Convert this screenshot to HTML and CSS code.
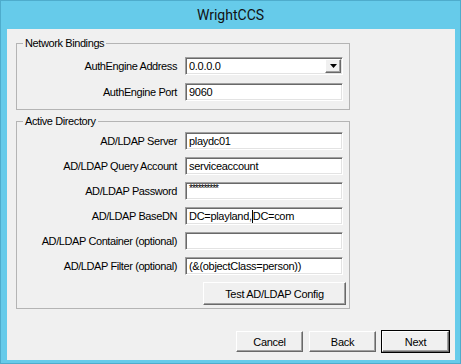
FILE: index.html
```html
<!DOCTYPE html>
<html lang="en">
<head>
<meta charset="utf-8">
<title>WrightCCS</title>
<link rel="stylesheet" href="styles.css">
</head>
<body>
    <div class="window">
        <div class="titlebar">WrightCCS</div>
        <div class="client">

            <fieldset class="group group_network">
                <legend>Network Bindings</legend>
                <div class="row">
                    <label class="field_label">AuthEngine Address</label>
                    <div class="combo">
                        <span class="combo_value">0.0.0.0</span>
                        <span class="combo_drop">
                            <svg width="7" height="4" viewBox="0 0 7 4"><path d="M0 0H7L3.5 4Z" fill="#000"/></svg>
                        </span>
                    </div>
                </div>
                <div class="row">
                    <label class="field_label">AuthEngine Port</label>
                    <div class="textbox">9060</div>
                </div>
            </fieldset>

            <fieldset class="group group_ad">
                <legend>Active Directory</legend>
                <div class="row">
                    <label class="field_label">AD/LDAP Server</label>
                    <div class="textbox">playdc01</div>
                </div>
                <div class="row">
                    <label class="field_label">AD/LDAP Query Account</label>
                    <div class="textbox">serviceaccount</div>
                </div>
                <div class="row">
                    <label class="field_label">AD/LDAP Password</label>
                    <div class="textbox password">**********</div>
                </div>
                <div class="row">
                    <label class="field_label">AD/LDAP BaseDN</label>
                    <div class="textbox">DC=playland,<span class="caret"></span>DC=com</div>
                </div>
                <div class="row">
                    <label class="field_label">AD/LDAP Container (optional)</label>
                    <div class="textbox"></div>
                </div>
                <div class="row">
                    <label class="field_label">AD/LDAP Filter (optional)</label>
                    <div class="textbox">(&amp;(objectClass=person))</div>
                </div>
                <div class="test_row">
                    <button class="btn btn_test">Test AD/LDAP Config</button>
                </div>
            </fieldset>

            <div class="nav_buttons">
                <button class="btn">Cancel</button>
                <button class="btn">Back</button>
                <button class="btn btn_default">Next</button>
            </div>
        </div>
    </div>
</body>
</html>
```

FILE: styles.css
```css
body {
    margin: 0;
    font-family: "Liberation Sans", Arial, sans-serif;
    font-size: 11px;
    color: #000;
}

.window {
    width: 461px;
    height: 364px;
    box-sizing: border-box;
    background-color: #66cbea;
    border: 1px solid #4eaccc;
    display: flex;
    flex-direction: column;
}

.titlebar {
    height: 28px;
    display: flex;
    align-items: center;
    justify-content: center;
    font-family: Roboto, "Liberation Sans", sans-serif;
    font-size: 14px;
    color: #111;
}

.client {
    flex: 1;
    margin: 0 5px 3px 6px;
    background-color: #f0f0f0;
    padding-left: 9px;
}

.group {
    width: 334px;
    box-sizing: border-box;
    margin: 8px 0 0 0;
    border: 1px solid #b4b4b4;
    padding: 7px 0 8px 0;
    min-width: 0;
}

.group legend {
    margin-left: 6px;
    padding: 0 2px;
    line-height: 13px;
    letter-spacing: -0.4px;
}

.group_network .row + .row {
    margin-top: 8px;
}

.group_ad {
    margin-top: 5px;
    padding-top: 4px;
    padding-bottom: 3px;
}

.group_ad .row + .row {
    margin-top: 7px;
}

.row {
    display: flex;
    align-items: center;
    height: 18px;
}

.field_label {
    width: 160px;
    text-align: right;
    margin-right: 8px;
    letter-spacing: -0.4px;
    white-space: nowrap;
}

.textbox,
.combo {
    width: 158px;
    height: 18px;
    box-sizing: border-box;
    background-color: #fff;
    border: 1px solid;
    border-color: #a0a0a0 #fff #fff #a0a0a0;
    box-shadow: inset 1px 1px 0 #696969, inset -1px -1px 0 #e3e3e3;
    padding: 0 0 0 3px;
    line-height: 16px;
    letter-spacing: -0.3px;
    white-space: nowrap;
    overflow: hidden;
}

.password {
    line-height: 12px;
    font-size: 10px;
    letter-spacing: -1px;
}

.caret {
    display: inline-block;
    width: 1px;
    height: 13px;
    background-color: #000;
    vertical-align: -3px;
}

.combo {
    display: flex;
    align-items: center;
    justify-content: space-between;
    padding-right: 1px;
}

.combo_drop {
    width: 16px;
    height: 14px;
    box-sizing: border-box;
    background-color: #f0f0f0;
    border: 1px solid;
    border-color: #fff #696969 #696969 #fff;
    box-shadow: inset -1px -1px 0 #a0a0a0;
    display: flex;
    align-items: center;
    justify-content: center;
}

.test_row {
    display: flex;
    justify-content: flex-end;
    margin-top: 7px;
    padding-right: 3px;
}

.btn {
    font-family: "Liberation Sans", Arial, sans-serif;
    font-size: 11px;
    letter-spacing: -0.3px;
    color: #000;
    background-color: #f0f0f0;
    border: 1px solid;
    border-color: #fff #696969 #696969 #fff;
    box-shadow: inset -1px -1px 0 #a0a0a0;
    width: 67px;
    height: 21px;
    padding: 0;
    margin: 0;
}

.btn_test {
    width: 143px;
    height: 23px;
}

.btn_default {
    outline: 1px solid #000;
    outline-offset: 0;
}

.nav_buttons {
    display: flex;
    justify-content: flex-end;
    gap: 6px;
    margin-top: 22px;
    padding-right: 6px;
}
```
